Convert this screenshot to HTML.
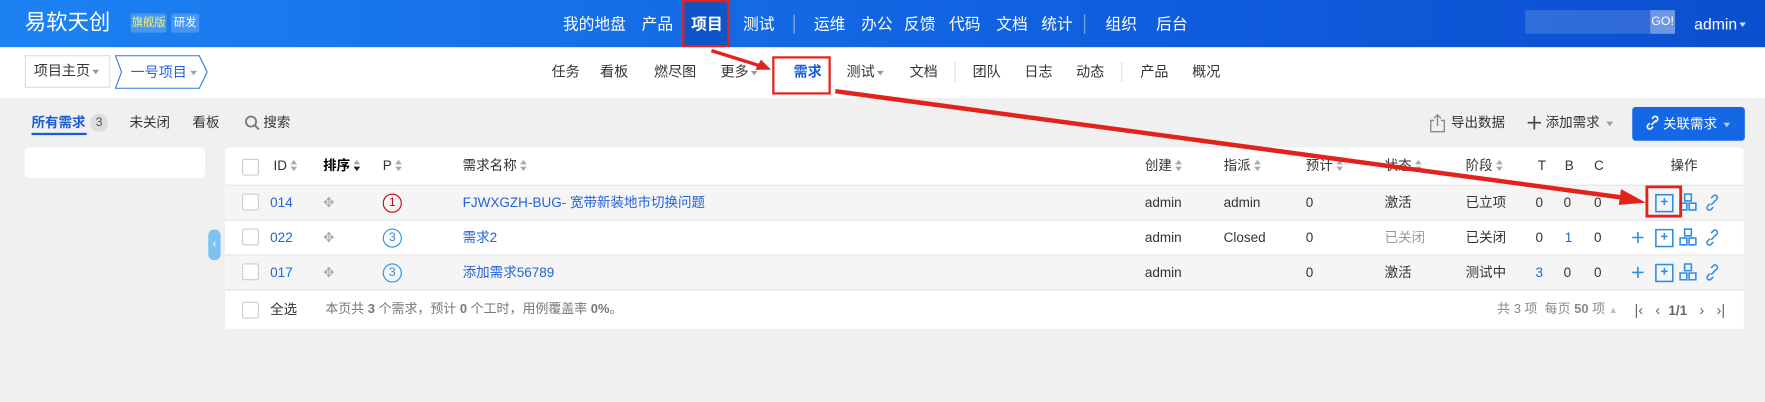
<!DOCTYPE html>
<html><head><meta charset="utf-8"><style>
*{box-sizing:border-box;margin:0;padding:0}
html,body{width:1765px;height:402px;overflow:hidden;background:#f0f0f0}
#w{position:absolute;left:0;top:0;width:1568px;height:357px;transform:scale(1.1257);transform-origin:0 0;font-family:"Liberation Sans","Noto Sans CJK SC",sans-serif;font-size:12px;line-height:16px;color:#333;background:#f0f0f0}
.a{position:absolute;white-space:nowrap}
#hd{position:absolute;left:0;top:0;width:1568px;height:42px;background:linear-gradient(90deg,#1c82f2,#1060df 60%,#0b4fd0)}
#hd .n{position:absolute;top:12px;color:#fff;font-size:14px;line-height:18px}
#sub{position:absolute;left:0;top:42px;width:1568px;height:45px;background:#fff}
#sub .n{position:absolute;top:14px;color:#333;font-size:12.5px;line-height:16px}
.sep{position:absolute;width:1px;background:#ddd}
.car{display:inline-block;border-left:3px solid transparent;border-right:3px solid transparent;border-top:4px solid #999;vertical-align:middle;margin-left:2px}
.tbl{position:absolute;left:200px;top:131px;width:1349px;height:161px;background:#fff;border-radius:3px}
.row{position:absolute;left:0;width:1349px;height:31px;border-top:1px solid #e5e5e5}
.c{position:absolute;top:0;line-height:31px;white-space:nowrap}
.h{line-height:33px}
.cb{position:absolute;left:15px;width:15px;height:15px;border:1px solid #ccc;border-radius:2px;background:#fff}
.s{display:inline-block;width:7px;height:10px;margin-left:3px;vertical-align:-1px;position:relative}
.s:before{content:"";position:absolute;left:0;top:0;border-left:3.5px solid transparent;border-right:3.5px solid transparent;border-bottom:4px solid #aaa}
.s:after{content:"";position:absolute;left:0;top:6px;border-left:3.5px solid transparent;border-right:3.5px solid transparent;border-top:4px solid #aaa}
.s.d:after{border-top-color:#222}
.lk{color:#2463d6}
.pc{position:absolute;top:7px;width:17px;height:17px;border-radius:50%;border:1.5px solid #2c8ee8;color:#2c8ee8;font-size:11px;text-align:center;line-height:14px}
</style></head><body><div id="w">
<div id="hd">
 <div class="a" style="left:22px;top:9px;color:#fff;font-size:19px;line-height:23px">易软天创</div>
 <div class="a" style="left:116px;top:12px;width:32px;background:rgba(255,255,255,.2);color:#f3f070;font-size:10px;line-height:17px;text-align:center;border-radius:2px">旗舰版</div>
 <div class="a" style="left:152px;top:12px;width:25px;background:rgba(255,255,255,.2);color:#fff;font-size:10px;line-height:17px;text-align:center;border-radius:2px">研发</div>
 <div class="n" style="left:500px">我的地盘</div><div class="n" style="left:570px">产品</div>
 <div class="a" style="left:606px;top:0;width:42px;height:42px;background:#0d56c9;border:2px solid #e3221b"></div>
 <div class="n" style="left:614px;font-weight:bold">项目</div>
 <div class="n" style="left:660px">测试</div>
 <div class="a" style="left:705px;top:13px;width:1px;height:17px;background:rgba(255,255,255,.5)"></div>
 <div class="n" style="left:723px">运维</div><div class="n" style="left:765px">办公</div><div class="n" style="left:803px">反馈</div><div class="n" style="left:843px">代码</div><div class="n" style="left:885px">文档</div><div class="n" style="left:925px">统计</div>
 <div class="a" style="left:963px;top:13px;width:1px;height:17px;background:rgba(255,255,255,.5)"></div>
 <div class="n" style="left:982px">组织</div><div class="n" style="left:1027px">后台</div>
 <div class="a" style="left:1355px;top:9px;width:133px;height:21px;background:rgba(255,255,255,.15)"></div>
 <div class="a" style="left:1466px;top:9px;width:22px;height:21px;background:rgba(255,255,255,.3);color:#fff;font-size:11px;line-height:21px;text-align:center">GO!</div>
 <div class="n" style="left:1505px">admin<span class="car" style="border-top-color:#cde"></span></div>
</div>
<div id="sub">
 <div class="a" style="left:22px;top:7px;width:76px;height:29px;border:1px solid #ddd;padding:0 7px;font-size:12.5px;line-height:27px">项目主页<span class="car"></span></div>
 <svg class="a" style="left:102px;top:7px" width="84" height="30"><path d="M0.5 0.5H75L82 15L75 29.5H0.5L6 15Z" fill="#fff" stroke="#2e7de8"/><text x="14" y="19.5" font-size="12.5" fill="#2463d6" font-family="Liberation Sans,Noto Sans CJK SC,sans-serif">一号项目</text><path d="M67 14h6l-3 4z" fill="#8ab"/></svg>
 <div class="n" style="left:490px">任务</div><div class="n" style="left:533px">看板</div><div class="n" style="left:581px">燃尽图</div><div class="n" style="left:640px">更多<span class="car"></span></div>
 <div class="a" style="left:686px;top:8px;width:52px;height:34px;border:2px solid #e3221b"></div>
 <div class="n" style="left:705px;color:#1a5bd6;font-weight:bold">需求</div>
 <div class="n" style="left:752px">测试<span class="car"></span></div><div class="n" style="left:808px">文档</div>
 <div class="sep" style="left:848px;top:13px;height:18px"></div>
 <div class="n" style="left:864px">团队</div><div class="n" style="left:910px">日志</div><div class="n" style="left:956px">动态</div>
 <div class="sep" style="left:996px;top:13px;height:18px"></div>
 <div class="n" style="left:1013px">产品</div><div class="n" style="left:1059px">概况</div>
</div>
<div class="a" style="left:28px;top:101px;color:#1a5bd6;font-weight:bold">所有需求</div>
<div class="a" style="left:80px;top:101px;width:16px;height:16px;border-radius:8px;background:#ddd;font-size:11px;text-align:center;line-height:16px;color:#555">3</div>
<div class="a" style="left:28px;top:118px;width:49px;height:2px;background:#1a5bd6"></div>
<div class="a" style="left:115px;top:101px">未关闭</div><div class="a" style="left:171px;top:101px">看板</div>
<svg class="a" style="left:217px;top:102px" width="14" height="14"><circle cx="6" cy="6" r="4.5" fill="none" stroke="#777" stroke-width="1.6"/><path d="M9.5 9.5L13 13" stroke="#777" stroke-width="1.8"/></svg>
<div class="a" style="left:234px;top:101px">搜索</div>
<svg class="a" style="left:1269px;top:100px" width="16" height="18"><path d="M5 7H2v10h12V7h-3M8 12V2M5 5l3-3 3 3" fill="none" stroke="#888" stroke-width="1.2"/></svg>
<div class="a" style="left:1289px;top:101px">导出数据</div>
<svg class="a" style="left:1357px;top:103px" width="12" height="12"><path d="M6 0v12M0 6h12" stroke="#444" stroke-width="1.5"/></svg>
<div class="a" style="left:1373px;top:101px">添加需求<span class="car" style="margin-left:6px"></span></div>
<div class="a" style="left:1450px;top:95px;width:100px;height:30px;background:#1468e6;border-radius:3px;color:#fff;padding-left:12px;line-height:30px"><svg width="12" height="14" style="vertical-align:-2px"><path d="M5 9L9 5M3.5 7.5l-1.5 1.5a2 2 0 003 3l1.5-1.5M8.5 6.5l1.5-1.5a2 2 0 00-3-3L5.5 3.5" fill="none" stroke="#fff" stroke-width="1.5"/></svg> 关联需求<span class="car" style="border-top-color:#bcd;margin-left:6px"></span></div>
<div class="a" style="left:22px;top:131px;width:160px;height:27px;background:#fff;border-radius:3px"></div>
<div class="a" style="left:185px;top:204px;width:11px;height:27px;background:#7cc3f3;border-radius:5px;color:#fff;font-size:10px;line-height:27px;text-align:center">‹</div>
<div class="tbl">
 <div class="cb" style="top:10px"></div>
 <div class="c h" style="left:43px">ID<i class="s"></i></div>
 <div class="c h" style="left:87px;font-weight:bold;color:#000">排序<i class="s d"></i></div>
 <div class="c h" style="left:140px">P<i class="s"></i></div>
 <div class="c h" style="left:211px">需求名称<i class="s"></i></div>
 <div class="c h" style="left:817px">创建<i class="s"></i></div>
 <div class="c h" style="left:887px">指派<i class="s"></i></div>
 <div class="c h" style="left:960px">预计<i class="s"></i></div>
 <div class="c h" style="left:1030px">状态<i class="s"></i></div>
 <div class="c h" style="left:1102px">阶段<i class="s"></i></div>
 <div class="c h" style="left:1166px">T</div><div class="c h" style="left:1190px">B</div><div class="c h" style="left:1216px">C</div>
 <div class="c h" style="left:1284px">操作</div>

 <div class="row" style="top:33px;background:#f5f5f5"><div class="cb" style="top:7px"></div><div class="c lk" style="left:40px">014</div><div class="c" style="left:87px;color:#aaa">✥</div><div class="pc" style="left:140px;border-color:#d0021b;color:#d0021b">1</div><div class="c lk" style="left:211px">FJWXGZH-BUG- 宽带新装地市切换问题</div><div class="c" style="left:817px">admin</div><div class="c" style="left:887px">admin</div><div class="c" style="left:960px">0</div><div class="c" style="left:1030px">激活</div><div class="c" style="left:1102px">已立项</div><div class="c" style="left:1164px">0</div><div class="c" style="left:1189px">0</div><div class="c" style="left:1216px">0</div></div>
 <div class="row" style="top:64px;background:#fff"><div class="cb" style="top:7px"></div><div class="c lk" style="left:40px">022</div><div class="c" style="left:87px;color:#aaa">✥</div><div class="pc" style="left:140px">3</div><div class="c lk" style="left:211px">需求2</div><div class="c" style="left:817px">admin</div><div class="c" style="left:887px">Closed</div><div class="c" style="left:960px">0</div><div class="c" style="left:1030px;color:#999">已关闭</div><div class="c" style="left:1102px">已关闭</div><div class="c" style="left:1164px">0</div><div class="c lk" style="left:1190px">1</div><div class="c" style="left:1216px">0</div></div>
 <div class="row" style="top:95px;background:#f5f5f5"><div class="cb" style="top:7px"></div><div class="c lk" style="left:40px">017</div><div class="c" style="left:87px;color:#aaa">✥</div><div class="pc" style="left:140px">3</div><div class="c lk" style="left:211px">添加需求56789</div><div class="c" style="left:817px">admin</div><div class="c" style="left:960px">0</div><div class="c" style="left:1030px">激活</div><div class="c" style="left:1102px">测试中</div><div class="c lk" style="left:1164px">3</div><div class="c" style="left:1189px">0</div><div class="c" style="left:1216px">0</div></div>
 <div class="row" style="top:126px;height:35px;background:#fff;border-top:1px solid #ddd"><div class="cb" style="top:10px"></div><div class="c" style="left:40px;line-height:35px">全选</div><div class="c" style="left:89px;line-height:35px;color:#777;font-size:11.5px">本页共 <b>3</b> 个需求，预计 <b>0</b> 个工时，用例覆盖率 <b>0%</b>。</div>
 <div class="c" style="left:1130px;line-height:35px;color:#888;font-size:11.5px">共 3 项 &nbsp;每页 <b>50</b> 项 <span style="font-size:8px;color:#bbb">▲</span></div>
 <div class="c" style="left:1252px;line-height:35px;color:#666;font-size:13px">|‹ &nbsp; ‹ &nbsp;<b style="font-size:12px">1/1</b> &nbsp; › &nbsp; ›|</div></div>
</div>
<svg class="a" style="left:0;top:0" width="1568" height="357">
 <defs><g id="ops" fill="none" stroke="#2c8ee8" stroke-width="1.4">
  <rect x="1471" y="-7" width="15" height="15"/><path d="M1478.5 -4v6M1475.5 -1h6"/>
  <path d="M1492.5 0.5h6v6h-6zM1500.5 0.5h6v6h-6zM1496.5 -7.5h6v6h-6z"/>
  <path d="M1519 1l-2 2a2 2 0 003 3l2-2M1523 -1l2-2a2 2 0 00-3-3l-2 2M1520 2l3-3"/>
 </g></defs>
 <use href="#ops" y="180"/><use href="#ops" y="211"/><use href="#ops" y="242"/>
 <path d="M1450 211h10M1455 206v10M1450 242h10M1455 237v10" stroke="#2c8ee8" stroke-width="1.4"/>
 <rect x="1463" y="166" width="30" height="26" fill="none" stroke="#e3221b" stroke-width="2.5"/>
 <path d="M632 45L680 60" stroke="#e3221b" stroke-width="3"/><path d="M685 62l-14 0 5-9z" fill="#e3221b"/>
 <path d="M742 81L1445 176" stroke="#e3221b" stroke-width="4"/><path d="M1462 180l-22-12-2 14z" fill="#e3221b"/>
</svg>
</div></body></html>
